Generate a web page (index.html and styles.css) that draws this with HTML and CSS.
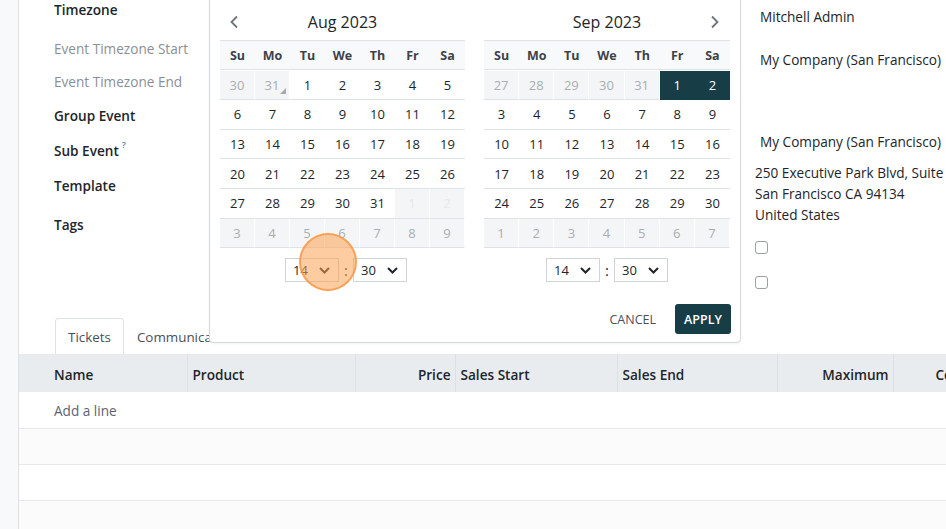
FILE: index.html
```html
<!DOCTYPE html>
<html>
<head>
<meta charset="utf-8">
<link rel="stylesheet" href="styles.css">
</head>
<body>
<div class="page">
  <div class="gutter"></div>
  <div class="sheet">
    <div class="form">
      <div class="labels">
        <div class="lbl strong h39">Timezone</div>
        <div class="lbl muted h33">Event Timezone Start</div>
        <div class="lbl muted h34">Event Timezone End</div>
        <div class="lbl strong h35">Group Event</div>
        <div class="lbl strong h35">Sub Event<sup class="help">?</sup></div>
        <div class="lbl strong h39">Template</div>
        <div class="lbl strong h39">Tags</div>
      </div>
      <div class="values">
        <div class="val v1">Mitchell Admin</div>
        <div class="val v2">My Company (San Francisco)</div>
        <div class="val v3">My Company (San Francisco)</div>
        <div class="addr">
          <div>250 Executive Park Blvd, Suite 3400</div>
          <div>San Francisco CA 94134</div>
          <div>United States</div>
        </div>
        <div class="check c1"></div>
        <div class="check c2"></div>
      </div>
    </div>

    <div class="notebook">
      <div class="tabs">
        <div class="tab active">Tickets</div>
        <div class="tab">Communication</div>
      </div>
      <table class="list">
        <colgroup>
          <col style="width:168px"><col style="width:168px"><col style="width:100px"><col style="width:162px"><col style="width:160px"><col style="width:116px"><col style="width:126px">
        </colgroup>
        <thead>
          <tr>
            <th class="first">Name</th>
            <th>Product</th>
            <th class="num">Price</th>
            <th>Sales Start</th>
            <th>Sales End</th>
            <th class="num">Maximum</th>
            <th class="last">Confirmed</th>
          </tr>
        </thead>
        <tbody>
          <tr class="add"><td class="first" colspan="7"><span class="addline">Add a line</span></td></tr>
          <tr class="odd"><td colspan="7"></td></tr>
          <tr><td colspan="7"></td></tr>
          <tr class="odd"><td colspan="7"></td></tr>
        </tbody>
      </table>
    </div>

    <div class="picker">
      <div class="months">
        <div class="cal">
          <div class="cal-head">
            <span class="nav prev"><svg width="10" height="14" viewBox="0 0 10 14"><path d="M8 1.5 L2.5 7 L8 12.5" fill="none" stroke="#6c757d" stroke-width="1.8"/></svg></span>
            <span class="title">Aug 2023</span>
          </div>
          <div class="grid">
            <div class="wd">Su</div><div class="wd">Mo</div><div class="wd">Tu</div><div class="wd">We</div><div class="wd">Th</div><div class="wd">Fr</div><div class="wd">Sa</div>
            <div class="d out">30</div><div class="d out today">31</div><div class="d">1</div><div class="d">2</div><div class="d">3</div><div class="d">4</div><div class="d">5</div>
            <div class="d">6</div><div class="d">7</div><div class="d">8</div><div class="d">9</div><div class="d">10</div><div class="d">11</div><div class="d">12</div>
            <div class="d">13</div><div class="d">14</div><div class="d">15</div><div class="d">16</div><div class="d">17</div><div class="d">18</div><div class="d">19</div>
            <div class="d">20</div><div class="d">21</div><div class="d">22</div><div class="d">23</div><div class="d">24</div><div class="d">25</div><div class="d">26</div>
            <div class="d">27</div><div class="d">28</div><div class="d">29</div><div class="d">30</div><div class="d">31</div><div class="d out faint">1</div><div class="d out faint">2</div>
            <div class="d out">3</div><div class="d out">4</div><div class="d out">5</div><div class="d out">6</div><div class="d out">7</div><div class="d out">8</div><div class="d out">9</div>
          </div>
          <div class="time shift">
            <div class="sel"><span>14</span><svg width="11" height="7" viewBox="0 0 11 7"><path d="M1 1 L5.5 5.5 L10 1" fill="none" stroke="#212529" stroke-width="2"/></svg></div>
            <span class="colon">:</span>
            <div class="sel"><span>30</span><svg width="11" height="7" viewBox="0 0 11 7"><path d="M1 1 L5.5 5.5 L10 1" fill="none" stroke="#212529" stroke-width="2"/></svg></div>
          </div>
        </div>
        <div class="cal">
          <div class="cal-head">
            <span class="title">Sep 2023</span>
            <span class="nav next"><svg width="10" height="14" viewBox="0 0 10 14"><path d="M2 1.5 L7.5 7 L2 12.5" fill="none" stroke="#6c757d" stroke-width="1.8"/></svg></span>
          </div>
          <div class="grid">
            <div class="wd">Su</div><div class="wd">Mo</div><div class="wd">Tu</div><div class="wd">We</div><div class="wd">Th</div><div class="wd">Fr</div><div class="wd">Sa</div>
            <div class="d out">27</div><div class="d out">28</div><div class="d out">29</div><div class="d out">30</div><div class="d out">31</div><div class="d sel-day">1</div><div class="d sel-day">2</div>
            <div class="d">3</div><div class="d">4</div><div class="d">5</div><div class="d">6</div><div class="d">7</div><div class="d">8</div><div class="d">9</div>
            <div class="d">10</div><div class="d">11</div><div class="d">12</div><div class="d">13</div><div class="d">14</div><div class="d">15</div><div class="d">16</div>
            <div class="d">17</div><div class="d">18</div><div class="d">19</div><div class="d">20</div><div class="d">21</div><div class="d">22</div><div class="d">23</div>
            <div class="d">24</div><div class="d">25</div><div class="d">26</div><div class="d">27</div><div class="d">28</div><div class="d">29</div><div class="d">30</div>
            <div class="d out">1</div><div class="d out">2</div><div class="d out">3</div><div class="d out">4</div><div class="d out">5</div><div class="d out">6</div><div class="d out">7</div>
          </div>
          <div class="time">
            <div class="sel"><span>14</span><svg width="11" height="7" viewBox="0 0 11 7"><path d="M1 1 L5.5 5.5 L10 1" fill="none" stroke="#212529" stroke-width="2"/></svg></div>
            <span class="colon">:</span>
            <div class="sel"><span>30</span><svg width="11" height="7" viewBox="0 0 11 7"><path d="M1 1 L5.5 5.5 L10 1" fill="none" stroke="#212529" stroke-width="2"/></svg></div>
          </div>
        </div>
      </div>
      <div class="actions">
        <button class="btn cancel">CANCEL</button>
        <button class="btn apply">APPLY</button>
      </div>
    </div>
  </div>
  <div class="cursor"></div>
</div>
</body>
</html>
```

FILE: styles.css
```css
* { box-sizing: border-box; }
html, body { margin: 0; padding: 0; }
body {
  width: 946px;
  height: 529px;
  overflow: hidden;
  font-family: "Open Sans", "Noto Sans", sans-serif;
  font-size: 13.6px;
  color: #212529;
  background: #f8f9fa;
}
.page {
  position: relative;
  display: flex;
  width: 946px;
  height: 529px;
}
.gutter {
  width: 19px;
  flex: none;
  background: #f8f9fa;
  border-right: 1px solid #dee2e6;
}
.sheet {
  position: relative;
  flex: 1;
  background: #fff;
  overflow: hidden;
}

/* form */
.form {
  display: grid;
  grid-template-columns: 736px 1fr;
  height: 318px;
}
.labels { padding-left: 35px; }
.lbl { line-height: 20px; white-space: nowrap; }
.strong { font-weight: 600; color: #212529; }
.muted { font-weight: 500; color: #8a8f95; }
.h33 { height: 33px; }
.h34 { height: 34px; }
.h35 { height: 35px; }
.h39 { height: 39px; }
.help {
  font-size: 9px;
  line-height: 0;
  color: #5b7f99;
  margin-left: 3px;
  vertical-align: 0;
  position: relative;
  top: -8px;
  font-weight: 600;
}
.values { white-space: nowrap; }
.val { line-height: 20px; padding-left: 5px; }
.v1 { margin-top: 7px; }
.v2 { margin-top: 23px; }
.v3 { margin-top: 62px; }
.addr { margin-top: 10px; line-height: 21px; }
.check {
  width: 13px;
  height: 13px;
  border: 1px solid #9aa0a6;
  border-radius: 3px;
  background: #fff;
}
.c1 { margin-top: 16px; }
.c2 { margin-top: 22px; }

/* notebook */
.tabs {
  display: flex;
  padding-left: 36px;
  height: 36px;
}
.tab {
  padding: 0 12px;
  line-height: 37px;
  font-size: 13.4px;
  color: #495057;
  border: 1px solid transparent;
  border-bottom: none;
  border-radius: 4px 4px 0 0;
  white-space: nowrap;
}
.tab.active {
  border-color: #dee2e6;
  background: #fff;
  color: #495057;
}
.list {
  width: 1000px;
  table-layout: fixed;
  border-collapse: collapse;
}
.list th {
  height: 38px;
  background: #e9ecef;
  text-align: left;
  font-weight: 600;
  padding: 2px 4px 0 5px;
  border-right: 1px solid #dde1e5;
  white-space: nowrap;
  overflow: hidden;
}
.list th.first, .list td.first { padding-left: 35px; }
.list th.num { text-align: right; }
.list th.last { padding-left: 42px; border-right: none; }
.list td {
  height: 36px;
  padding-top: 2px;
  border-bottom: 1px solid #e6e8eb;
}
.list tr.odd td { background: #fbfbfb; }
.addline { color: #5a6472; }

/* date picker popup */
.picker {
  position: absolute;
  left: 190px;
  top: -20px;
  width: 532px;
  background: #fff;
  border: 1px solid #d5d8dc;
  border-radius: 4px;
  padding: 30px 9px 8px 10px;
  box-shadow: 0 1px 3px rgba(0,0,0,0.05);
}
.months {
  display: flex;
  gap: 19px;
}
.cal { width: 245px; font-size: 13px; }
.cal + .cal { width: 246px; }
.cal-head {
  height: 29px;
  position: relative;
  text-align: center;
}
.title {
  display: block;
  font-size: 16px;
  line-height: 22px;
  font-weight: 500;
  color: #212529;
}
.nav {
  position: absolute;
  top: 4px;
  line-height: 0;
}
.prev { left: 9px; }
.next { right: 10px; }
.grid {
  display: grid;
  grid-template-columns: repeat(7, 1fr);
  grid-auto-rows: 29.6px;
  border-top: 1px solid #dee2e6;
}
.wd {
  background: #f8f9fa;
  border-bottom: 1px solid #dee2e6;
  font-weight: 700;
  font-size: 12.5px;
  color: #3d4349;
  display: flex;
  align-items: center;
  justify-content: center;
}
.grid .wd:nth-child(-n+7) { height: 29px; }
.d {
  position: relative;
  display: flex;
  align-items: center;
  justify-content: center;
  border-bottom: 1px solid #dee2e6;
  color: #212529;
}
.d.out {
  background: #f4f5f6;
  color: #a9aeb3;
  border-right: 1px solid #fff;
}
.d.faint { color: #e6e8ea; }
.d.today::after {
  content: "";
  position: absolute;
  right: 3px;
  bottom: 5px;
  border-left: 6px solid transparent;
  border-bottom: 6px solid #a5aab0;
}
.d.sel-day {
  background: #173e47;
  color: #fff;
  border-bottom-color: #173e47;
}
.time {
  display: flex;
  justify-content: center;
  align-items: center;
  gap: 5px;
  margin-top: 10px;
  height: 24px;
}
.time.shift { padding-left: 7px; }
.sel {
  width: 54px;
  height: 24px;
  border: 1px solid #ced4da;
  background: #fff;
  display: flex;
  align-items: center;
  justify-content: space-between;
  padding: 0 8px 0 7px;
  font-size: 13px;
}
.colon { font-size: 15px; width: 4px; text-align: center; color: #212529; }
.actions {
  display: flex;
  justify-content: flex-end;
  gap: 9px;
  margin-top: 22px;
}
.btn {
  font-family: inherit;
  font-size: 12.5px;
  height: 30px;
  border: none;
  border-radius: 3px;
  background: none;
  cursor: pointer;
}
.cancel { color: #495057; padding: 0 10px; }
.apply {
  background: #173e47;
  color: #fff;
  font-weight: 600;
  width: 56px;
  padding: 0;
}

/* click indicator */
.cursor {
  position: absolute;
  left: 299px;
  top: 233px;
  width: 58px;
  height: 58px;
  border-radius: 50%;
  background: rgba(251, 163, 82, 0.55);
  border: 2px solid rgba(246, 150, 66, 0.75);
}
```
